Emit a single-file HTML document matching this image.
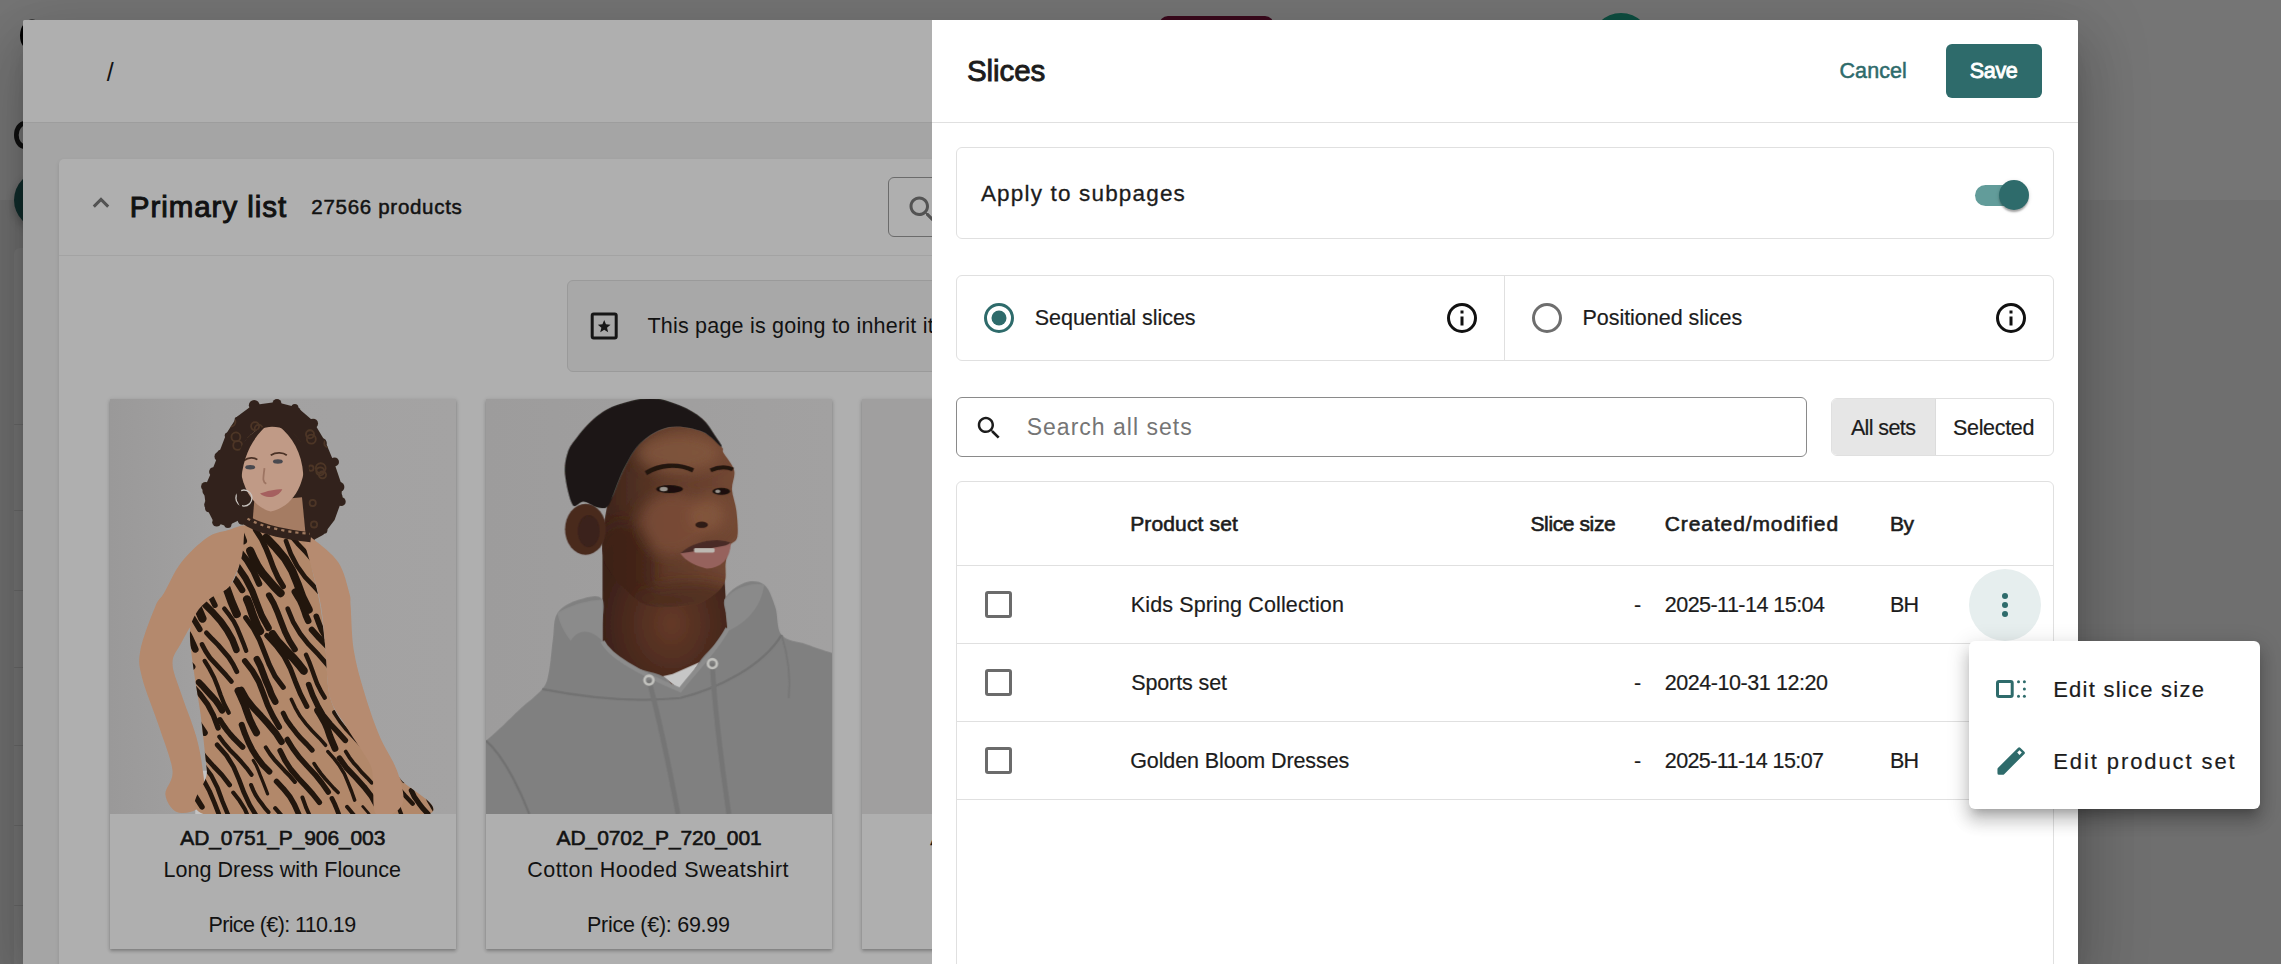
<!DOCTYPE html>
<html lang="en">
<head>
<meta charset="utf-8">
<title>Slices</title>
<style>
html,body{margin:0;padding:0}
html{width:2281px;height:964px;overflow:hidden;background:#6f6f6f}
body{width:2281px;height:964px;overflow:hidden;position:relative;background:#6f6f6f;font-family:"Liberation Sans",sans-serif;color:#1c1c1c}
.abs{position:absolute}
.t{position:absolute;white-space:nowrap;line-height:1;margin:0;padding:0}
.b{font-weight:bold}
svg{display:block}
</style>
</head>
<body>
<!-- underlying page (dimmed by backdrop) -->
<div class="abs" id="under" style="left:0;top:0;width:2281px;height:964px;overflow:hidden">
  <div class="abs" style="left:0;top:0;width:2281px;height:200px;background:#757575"></div>
  <svg class="abs" style="left:0;top:0" width="80" height="260" viewBox="0 0 80 260"><ellipse cx="32" cy="35.5" rx="12" ry="16" fill="#000"/><ellipse cx="25" cy="135" rx="8.65" ry="11.65" fill="none" stroke="#101010" stroke-width="4.7"/></svg>
  <div class="abs" style="left:14px;top:248px;width:300px;height:800px;border-radius:6px;background:#757575">
    <div class="abs" style="left:0;top:176px;width:300px;height:1px;background:#696969"></div>
    <div class="abs" style="left:0;top:262px;width:300px;height:1px;background:#696969"></div>
    <div class="abs" style="left:0;top:342px;width:300px;height:1px;background:#696969"></div>
    <div class="abs" style="left:0;top:419px;width:300px;height:1px;background:#696969"></div>
    <div class="abs" style="left:0;top:497px;width:300px;height:1px;background:#696969"></div>
    <div class="abs" style="left:0;top:577px;width:300px;height:1px;background:#696969"></div>
    <div class="abs" style="left:0;top:657px;width:300px;height:1px;background:#696969"></div>
  </div>
  <div class="abs" style="left:13.8px;top:171px;width:58px;height:58px;border-radius:50%;background:#112c2b;box-shadow:0 4px 8px rgba(0,0,0,.25)"></div>
  <div class="abs" style="left:1159px;top:16px;width:115px;height:40px;border-radius:9px;background:#3b0a1d"></div>
  <div class="abs" style="left:1591px;top:13px;width:60px;height:60px;border-radius:50%;background:#0e4f41"></div>
</div>
<!-- modal -->
<div class="abs" id="modal" style="left:23px;top:20px;width:2055px;height:944px;background:#a5a5a5;border-radius:2px 2px 0 0;box-shadow:0 16px 22px -10px rgba(0,0,0,.2),0 36px 57px 4px rgba(0,0,0,.14),0 13px 69px 12px rgba(0,0,0,.12);overflow:hidden">
  <!-- modal header (dimmed) -->
  <div class="abs" style="left:0;top:0;width:909px;height:102px;background:#afafaf;border-bottom:1px solid #9d9d9d"></div>
  <!-- primary list card -->
  <div class="abs" id="plcard" style="left:36px;top:139px;width:900px;height:900px;background:#afafaf;border-radius:5px;box-shadow:0 2px 4px rgba(0,0,0,.12)">
    <div class="abs" style="left:0;top:96px;width:900px;height:1px;background:#a3a3a3"></div>
  </div>
  <!-- chevron -->
<svg class="abs" style="left:66px;top:174px" width="24" height="16" viewBox="0 0 24 16"><polyline points="4.8,12.6 12,5.4 19.2,12.6" fill="none" stroke="#535353" stroke-width="3"/></svg>
<!-- left search box -->
<div class="abs" style="left:865px;top:157px;width:220px;height:58px;border:1px solid #6b6b6b;border-radius:6px"></div>
<svg class="abs" style="left:882px;top:171.5px" width="36" height="36" viewBox="0 0 24 24"><path fill="#535353" d="M15.5 14h-.79l-.28-.27C15.41 12.59 16 11.11 16 9.5 16 5.91 13.09 3 9.5 3S3 5.91 3 9.5 5.91 16 9.5 16c1.61 0 3.09-.59 4.23-1.57l.27.28v.79l5 4.99L20.49 19l-4.99-5zm-6 0C7.01 14 5 11.99 5 9.5S7.01 5 9.5 5 14 7.01 14 9.5 11.99 14 9.5 14z"/></svg>
<!-- info banner -->
<div class="abs" style="left:544px;top:260px;width:520px;height:90px;background:#a8a8a8;border:1px solid #9a9a9a;border-radius:6px"></div>
<svg class="abs" style="left:563px;top:288px" width="36" height="36" viewBox="0 0 36 36"><rect x="6.2" y="6.1" width="24" height="24" rx="1.5" fill="none" stroke="#161616" stroke-width="3"/><path fill="#161616" transform="translate(18.2 18.9) scale(.88) translate(-18.2 -18.4)" d="M18.2 10.6l2 4.9 5.2.4-4 3.4 1.3 5.1-4.5-2.8-4.5 2.8 1.3-5.1-4-3.4 5.2-.4z"/></svg>
<!-- product card 1 -->
<div class="abs" style="left:87px;top:379px;width:346px;height:550px;background:#afafaf;box-shadow:0 2px 3px rgba(0,0,0,.22),0 1px 5px rgba(0,0,0,.12)">
<svg class="abs" style="left:0;top:0" width="346" height="415" viewBox="22 20 775 930" preserveAspectRatio="none">
<defs><linearGradient id="bg1" x1="0" x2="1" y1="0" y2="0"><stop offset="0" stop-color="#9a9999"/><stop offset=".3" stop-color="#a2a1a1"/><stop offset="1" stop-color="#a4a3a3"/></linearGradient>
<clipPath id="hr1"><path d="M394,27 L442,39 L476,68 L505,117 L525,165 L541,213 L541,247 L525,291 L500,324 L476,337 L457,310 L440,290 L340,285 L331,281 L312,291 L283,305 L254,295 L237,262 L232,223 L249,184 L264,146 L283,97 L307,59 L341,34 Z"/></clipPath><filter id="soft1" filterUnits="userSpaceOnUse" x="0" y="0" width="830" height="990"><feGaussianBlur stdDeviation="1.6"/></filter><clipPath id="dr1"><path d="M331.0,298.0 C343.8,289.3 373.7,312.8 395.0,318.0 C416.3,323.2 445.5,314.2 459.0,329.0 C472.5,343.8 470.3,381.2 476.0,407.0 C481.7,432.8 488.2,454.7 493.0,484.0 C497.8,513.3 501.3,548.8 505.0,583.0 C508.7,617.2 507.0,660.0 515.0,689.0 C523.0,718.0 534.5,734.5 553.0,757.0 C571.5,779.5 605.8,804.7 626.0,824.0 C646.2,843.3 658.0,851.2 674.0,873.0 C690.0,894.8 792.8,941.3 722.0,955.0 C651.2,968.7 329.5,972.0 249.0,955.0 C168.5,938.0 243.0,890.8 239.0,853.0 C235.0,815.2 229.8,765.0 225.0,728.0 C220.2,691.0 214.0,661.7 210.0,631.0 C206.0,600.3 200.2,565.8 201.0,544.0 C201.8,522.2 207.7,512.7 215.0,500.0 C222.3,487.3 232.0,478.7 245.0,468.0 C258.0,457.3 280.8,452.3 293.0,436.0 C305.2,419.7 311.7,393.0 318.0,370.0 C324.3,347.0 318.2,306.7 331.0,298.0 Z"/></clipPath></defs>
<rect x="22" y="20" width="775" height="930" fill="url(#bg1)"/><g filter="url(#soft1)">
<rect x="213" y="853" width="38" height="100" fill="#c4c4c4"/>
<path d="M394,27 L442,39 L476,68 L505,117 L525,165 L541,213 L541,247 L525,291 L500,324 L476,337 L457,310 L440,290 L340,285 L331,281 L312,291 L283,305 L254,295 L237,262 L232,223 L249,184 L264,146 L283,97 L307,59 L341,34 Z" fill="#33241c"/>
<g fill="#33241c"><circle cx="395" cy="36" r="10"/><circle cx="396" cy="30" r="10"/><circle cx="439" cy="48" r="10"/><circle cx="436" cy="39" r="8"/><circle cx="477" cy="75" r="11"/><circle cx="476" cy="76" r="9"/><circle cx="497" cy="118" r="10"/><circle cx="498" cy="119" r="9"/><circle cx="525" cy="161" r="10"/><circle cx="514" cy="161" r="10"/><circle cx="536" cy="217" r="11"/><circle cx="529" cy="211" r="9"/><circle cx="540" cy="250" r="10"/><circle cx="534" cy="240" r="9"/><circle cx="516" cy="283" r="10"/><circle cx="514" cy="289" r="7"/><circle cx="501" cy="314" r="8"/><circle cx="491" cy="313" r="11"/><circle cx="469" cy="334" r="11"/><circle cx="467" cy="334" r="8"/><circle cx="459" cy="308" r="11"/><circle cx="456" cy="308" r="7"/><circle cx="348" cy="37" r="9"/><circle cx="345" cy="34" r="12"/><circle cx="312" cy="68" r="7"/><circle cx="308" cy="67" r="7"/><circle cx="292" cy="101" r="8"/><circle cx="286" cy="102" r="7"/><circle cx="271" cy="143" r="9"/><circle cx="267" cy="149" r="11"/><circle cx="254" cy="183" r="10"/><circle cx="260" cy="188" r="11"/><circle cx="236" cy="216" r="10"/><circle cx="241" cy="226" r="12"/><circle cx="244" cy="265" r="9"/><circle cx="244" cy="257" r="11"/><circle cx="264" cy="289" r="9"/><circle cx="261" cy="296" r="10"/><circle cx="285" cy="294" r="11"/><circle cx="286" cy="301" r="8"/><circle cx="320" cy="281" r="11"/><circle cx="319" cy="291" r="11"/><circle cx="331" cy="282" r="10"/><circle cx="335" cy="282" r="11"/></g><g fill="none" stroke="#4d3627" stroke-width="4" clip-path="url(#hr1)"><circle cx="347" cy="81" r="9"/><circle cx="473" cy="110" r="10"/><circle cx="511" cy="119" r="9"/><circle cx="308" cy="124" r="10"/><circle cx="472" cy="175" r="6"/><circle cx="476" cy="253" r="7"/><circle cx="498" cy="190" r="8"/><circle cx="304" cy="105" r="10"/><circle cx="292" cy="71" r="11"/><circle cx="355" cy="87" r="9"/><circle cx="470" cy="99" r="9"/><circle cx="256" cy="68" r="11"/><circle cx="493" cy="182" r="9"/><circle cx="369" cy="297" r="10"/><circle cx="479" cy="301" r="7"/><circle cx="261" cy="110" r="7"/><circle cx="273" cy="73" r="9"/><circle cx="494" cy="175" r="11"/><circle cx="505" cy="76" r="9"/></g>
<path d="M345,250 L340,312 L460,322 L452,240 Z" fill="#a57b63"/>
<path d="M313,165 C312,110 345,84 385,82 C430,84 458,112 458,160 C458,210 432,262 382,272 C340,262 316,215 313,165 Z" fill="#c09a86"/>
<path d="M331.0,306.0 C325.2,296.7 300.3,309.8 285.0,314.0 C269.7,318.2 256.3,318.8 239.0,331.0 C221.7,343.2 197.0,366.3 181.0,387.0 C165.0,407.7 152.7,438.5 143.0,455.0 C133.3,471.5 131.8,464.7 123.0,486.0 C114.2,507.3 94.8,556.5 90.0,583.0 C85.2,609.5 86.8,616.0 94.0,645.0 C101.2,674.0 121.7,722.3 133.0,757.0 C144.3,791.7 159.8,828.2 162.0,853.0 C164.2,877.8 144.7,890.7 146.0,906.0 C147.3,921.3 158.5,939.3 170.0,945.0 C181.5,950.7 204.7,947.5 215.0,940.0 C225.3,932.5 229.5,914.5 232.0,900.0 C234.5,885.5 232.8,873.7 230.0,853.0 C227.2,832.3 223.2,805.0 215.0,776.0 C206.8,747.0 189.8,706.3 181.0,679.0 C172.2,651.7 162.0,630.5 162.0,612.0 C162.0,593.5 172.2,584.2 181.0,568.0 C189.8,551.8 199.7,529.0 215.0,515.0 C230.3,501.0 260.0,497.2 273.0,484.0 C286.0,470.8 285.2,455.0 293.0,436.0 C300.8,417.0 313.7,391.7 320.0,370.0 C326.3,348.3 336.8,315.3 331.0,306.0 Z" fill="#b4896d"/>
<path d="M331.0,298.0 C343.8,289.3 373.7,312.8 395.0,318.0 C416.3,323.2 445.5,314.2 459.0,329.0 C472.5,343.8 470.3,381.2 476.0,407.0 C481.7,432.8 488.2,454.7 493.0,484.0 C497.8,513.3 501.3,548.8 505.0,583.0 C508.7,617.2 507.0,660.0 515.0,689.0 C523.0,718.0 534.5,734.5 553.0,757.0 C571.5,779.5 605.8,804.7 626.0,824.0 C646.2,843.3 658.0,851.2 674.0,873.0 C690.0,894.8 792.8,941.3 722.0,955.0 C651.2,968.7 329.5,972.0 249.0,955.0 C168.5,938.0 243.0,890.8 239.0,853.0 C235.0,815.2 229.8,765.0 225.0,728.0 C220.2,691.0 214.0,661.7 210.0,631.0 C206.0,600.3 200.2,565.8 201.0,544.0 C201.8,522.2 207.7,512.7 215.0,500.0 C222.3,487.3 232.0,478.7 245.0,468.0 C258.0,457.3 280.8,452.3 293.0,436.0 C305.2,419.7 311.7,393.0 318.0,370.0 C324.3,347.0 318.2,306.7 331.0,298.0 Z" fill="#b2886b"/>
<g clip-path="url(#dr1)" fill="none" stroke="#21160f" stroke-linecap="round" stroke-linejoin="round"><path d="M-214,463 L-208,477 L-203,491 L-198,505 L-192,518 L-185,532 L-177,544" stroke-width="10.7"/><path d="M-151,564 L-144,582 L-137,600 L-130,618 L-121,635 L-110,651 L-98,666" stroke-width="13.7"/><path d="M-80,672 L-72,691 L-65,711 L-57,730 L-49,749 L-39,766 L-27,783" stroke-width="8.8"/><path d="M-8,790 L9,812 L23,837 L33,864 L43,891 L55,916 L71,940" stroke-width="8.3"/><path d="M93,947 L107,974 L118,1003 L130,1032 L144,1059 L163,1083 L184,1106" stroke-width="8.4"/><path d="M205,1127 L211,1139 L216,1150 L220,1162 L225,1174 L229,1186 L234,1198" stroke-width="7.7"/><path d="M252,1230 L261,1241 L270,1252 L280,1262 L290,1273 L299,1283 L308,1294" stroke-width="10.9"/><path d="M310,1319 L320,1340 L333,1360 L348,1378 L364,1395 L380,1412 L395,1431" stroke-width="8.2"/><path d="M-192,449 L-186,461 L-181,473 L-176,485 L-172,497 L-167,510 L-162,522" stroke-width="16.8"/><path d="M-150,537 L-143,554 L-135,570 L-125,585 L-114,599 L-102,613 L-89,626" stroke-width="13.7"/><path d="M-72,649 L-62,676 L-51,702 L-38,726 L-21,748 L-2,768 L17,789" stroke-width="10.1"/><path d="M28,820 L44,836 L59,853 L72,871 L83,890 L92,911 L100,932" stroke-width="11.6"/><path d="M125,959 L143,985 L157,1013 L168,1043 L180,1073 L196,1099 L216,1124" stroke-width="8.5"/><path d="M225,1139 L235,1149 L245,1160 L256,1171 L265,1183 L274,1195 L282,1207" stroke-width="6.2"/><path d="M291,1233 L309,1253 L325,1275 L337,1299 L347,1325 L357,1351 L368,1375" stroke-width="11.3"/><path d="M-178,441 L-166,461 L-151,479 L-134,496 L-118,514 L-103,533 L-91,553" stroke-width="14.6"/><path d="M-87,585 L-72,611 L-53,636 L-32,658 L-11,681 L6,707 L19,735" stroke-width="14.5"/><path d="M36,755 L47,778 L57,803 L66,827 L77,850 L92,872 L108,892" stroke-width="14.2"/><path d="M134,912 L143,927 L150,943 L156,960 L162,976 L169,993 L176,1008" stroke-width="10.0"/><path d="M190,1028 L203,1044 L218,1060 L233,1075 L246,1092 L258,1109 L267,1128" stroke-width="6.7"/><path d="M265,1151 L281,1172 L300,1193 L319,1213 L336,1234 L349,1258 L360,1283" stroke-width="7.5"/><path d="M361,1303 L376,1328 L395,1350 L415,1372 L434,1394 L451,1418 L463,1445" stroke-width="8.7"/><path d="M-142,418 L-130,444 L-120,471 L-110,497 L-96,522 L-80,544 L-60,565" stroke-width="12.8"/><path d="M-45,599 L-32,613 L-19,627 L-6,641 L6,656 L16,672 L25,689" stroke-width="17.4"/><path d="M33,727 L43,739 L54,750 L65,761 L75,772 L85,784 L94,796" stroke-width="9.6"/><path d="M105,813 L116,834 L125,856 L134,878 L142,900 L153,921 L167,941" stroke-width="6.7"/><path d="M190,951 L200,967 L209,984 L217,1001 L223,1020 L230,1038 L238,1055" stroke-width="11.7"/><path d="M265,1072 L278,1090 L288,1110 L297,1130 L305,1151 L313,1172 L323,1192" stroke-width="10.1"/><path d="M342,1215 L354,1242 L370,1267 L390,1290 L411,1312 L430,1335 L446,1360" stroke-width="11.2"/><path d="M-135,414 L-121,428 L-107,443 L-95,458 L-84,474 L-74,492 L-67,510" stroke-width="16.3"/><path d="M-67,530 L-60,541 L-51,551 L-43,561 L-33,570 L-24,580 L-15,590" stroke-width="11.2"/><path d="M-11,610 L-2,619 L7,629 L15,638 L24,648 L31,658 L38,669" stroke-width="10.2"/><path d="M33,689 L45,703 L59,718 L72,732 L85,746 L96,761 L105,778" stroke-width="15.1"/><path d="M112,791 L121,803 L129,815 L136,827 L143,841 L148,854 L154,868" stroke-width="9.6"/><path d="M158,890 L165,902 L173,914 L181,925 L191,936 L201,947 L211,957" stroke-width="12.4"/><path d="M231,987 L245,1003 L258,1020 L268,1039 L277,1059 L284,1079 L292,1099" stroke-width="6.6"/><path d="M310,1107 L317,1123 L323,1139 L329,1155 L336,1171 L343,1187 L352,1201" stroke-width="7.0"/><path d="M380,1226 L391,1255 L404,1283 L420,1309 L441,1332 L462,1355 L482,1379" stroke-width="6.9"/><path d="M-117,402 L-108,423 L-97,442 L-84,461 L-69,477 L-54,494 L-38,511" stroke-width="18.6"/><path d="M-17,544 L-11,560 L-5,576 L1,592 L8,608 L16,623 L25,637" stroke-width="10.9"/><path d="M50,649 L58,670 L66,692 L75,713 L85,733 L97,752 L111,769" stroke-width="10.9"/><path d="M128,799 L141,823 L157,846 L176,867 L196,888 L213,910 L228,934" stroke-width="12.5"/><path d="M249,967 L264,991 L275,1017 L285,1044 L296,1070 L310,1094 L328,1116" stroke-width="7.4"/><path d="M343,1146 L355,1161 L368,1175 L381,1188 L394,1203 L406,1217 L416,1233" stroke-width="6.2"/><path d="M416,1250 L422,1266 L429,1282 L437,1297 L446,1311 L457,1325 L468,1337" stroke-width="11.7"/><path d="M-81,380 L-62,405 L-46,432 L-34,462 L-23,492 L-9,520 L10,545" stroke-width="13.6"/><path d="M38,574 L43,589 L49,605 L56,620 L63,634 L72,648 L82,661" stroke-width="10.9"/><path d="M96,675 L116,697 L135,720 L150,746 L162,774 L172,802 L185,829" stroke-width="11.7"/><path d="M215,852 L232,875 L245,899 L256,925 L266,951 L277,977 L292,1000" stroke-width="10.4"/><path d="M312,1006 L328,1029 L341,1053 L351,1079 L361,1105 L373,1130 L388,1152" stroke-width="8.9"/><path d="M405,1181 L422,1203 L441,1224 L460,1244 L477,1266 L490,1290 L501,1316" stroke-width="10.8"/><path d="M-67,371 L-53,386 L-41,401 L-30,418 L-22,436 L-14,454 L-7,473" stroke-width="17.2"/><path d="M21,501 L26,514 L32,528 L37,542 L42,555 L47,568 L54,581" stroke-width="18.7"/><path d="M65,595 L71,609 L78,621 L86,634 L95,645 L105,656 L115,667" stroke-width="17.7"/><path d="M135,697 L142,714 L149,732 L158,749 L168,764 L179,779 L192,793" stroke-width="8.9"/><path d="M209,816 L230,839 L249,864 L263,892 L274,922 L286,951 L301,978" stroke-width="10.0"/><path d="M330,996 L342,1013 L351,1031 L359,1050 L366,1070 L374,1089 L382,1108" stroke-width="11.0"/><path d="M415,1131 L424,1145 L431,1160 L437,1176 L443,1192 L449,1208 L456,1223" stroke-width="7.4"/><path d="M475,1237 L487,1249 L497,1263 L506,1277 L514,1292 L521,1307 L527,1323" stroke-width="6.8"/><path d="M-41,355 L-32,374 L-24,393 L-17,413 L-9,433 L1,452 L12,469" stroke-width="19.0"/><path d="M36,489 L56,512 L73,537 L85,564 L96,593 L108,621 L123,647" stroke-width="14.7"/><path d="M148,663 L153,674 L157,686 L161,697 L166,709 L171,720 L176,731" stroke-width="9.9"/><path d="M195,749 L205,775 L218,799 L235,822 L254,843 L273,863 L290,885" stroke-width="10.6"/><path d="M298,902 L312,920 L324,939 L333,960 L342,982 L350,1004 L360,1025" stroke-width="9.1"/><path d="M379,1039 L388,1065 L400,1090 L415,1113 L433,1134 L453,1154 L471,1175" stroke-width="9.4"/><path d="M471,1194 L478,1211 L485,1226 L494,1241 L504,1255 L516,1268 L528,1281" stroke-width="9.0"/><path d="M-18,341 L-7,369 L4,397 L18,424 L36,448 L57,470 L77,493" stroke-width="16.1"/><path d="M93,513 L103,533 L111,553 L119,574 L127,595 L137,615 L149,633" stroke-width="13.8"/><path d="M179,652 L188,671 L196,691 L204,712 L212,732 L222,750 L234,768" stroke-width="14.0"/><path d="M262,795 L283,819 L299,845 L311,873 L322,902 L335,930 L351,956" stroke-width="10.5"/><path d="M372,967 L382,994 L393,1021 L407,1046 L424,1069 L444,1090 L463,1112" stroke-width="6.7"/><path d="M471,1127 L476,1140 L481,1152 L485,1165 L491,1177 L496,1189 L503,1200" stroke-width="6.4"/><path d="M516,1216 L535,1237 L554,1257 L571,1279 L584,1302 L595,1328 L605,1354" stroke-width="6.9"/><path d="M1,329 L11,340 L19,351 L27,364 L34,377 L40,390 L45,404" stroke-width="19.7"/><path d="M68,433 L79,462 L91,492 L105,519 L124,543 L146,566 L166,589" stroke-width="14.9"/><path d="M167,617 L185,640 L205,661 L224,682 L241,705 L254,730 L264,757" stroke-width="12.2"/><path d="M267,777 L278,792 L290,806 L303,819 L316,833 L328,847 L339,862" stroke-width="9.5"/><path d="M338,885 L343,897 L348,907 L355,918 L362,927 L369,937 L377,946" stroke-width="9.1"/><path d="M399,966 L411,980 L422,995 L431,1011 L439,1027 L446,1045 L452,1062" stroke-width="9.1"/><path d="M463,1091 L481,1117 L502,1141 L524,1164 L543,1189 L558,1217 L570,1246" stroke-width="11.8"/><path d="M15,320 L24,329 L33,338 L41,348 L48,358 L55,368 L61,379" stroke-width="12.7"/><path d="M70,414 L78,433 L88,451 L99,467 L113,482 L127,497 L141,512" stroke-width="18.2"/><path d="M151,550 L158,563 L166,575 L176,587 L185,598 L196,609 L206,620" stroke-width="14.7"/><path d="M221,655 L231,665 L240,675 L249,685 L258,695 L266,706 L273,718" stroke-width="14.3"/><path d="M268,739 L275,750 L283,761 L291,771 L300,781 L309,790 L319,800" stroke-width="12.5"/><path d="M343,830 L350,842 L355,854 L360,867 L365,879 L370,892 L375,905" stroke-width="7.2"/><path d="M392,937 L406,953 L420,968 L435,983 L448,999 L460,1016 L470,1035" stroke-width="9.3"/><path d="M470,1062 L479,1076 L490,1089 L502,1102 L514,1114 L526,1127 L537,1140" stroke-width="9.2"/><path d="M546,1155 L554,1167 L560,1179 L566,1192 L571,1205 L576,1218 L581,1231" stroke-width="6.3"/><path d="M42,303 L49,320 L55,337 L61,354 L69,370 L77,386 L87,401" stroke-width="12.9"/><path d="M105,429 L113,442 L122,455 L132,466 L142,478 L153,489 L163,500" stroke-width="10.2"/><path d="M177,519 L184,529 L191,538 L198,549 L203,559 L208,570 L213,581" stroke-width="15.1"/><path d="M234,607 L245,625 L255,644 L263,664 L270,684 L278,704 L288,723" stroke-width="9.6"/><path d="M317,750 L324,770 L332,789 L341,807 L352,824 L364,840 L379,855" stroke-width="13.4"/><path d="M395,877 L410,893 L424,910 L435,929 L444,949 L452,970 L460,991" stroke-width="12.3"/><path d="M473,1020 L491,1042 L511,1063 L530,1084 L547,1107 L560,1132 L571,1159" stroke-width="9.8"/><path d="M594,1183 L602,1200 L609,1217 L616,1235 L623,1253 L630,1270 L640,1286" stroke-width="6.8"/><path d="M55,295 L64,309 L74,323 L85,335 L97,348 L109,360 L120,373" stroke-width="10.8"/><path d="M120,394 L133,420 L150,444 L170,466 L190,488 L208,511 L223,536" stroke-width="12.8"/><path d="M228,570 L236,585 L246,600 L258,613 L270,626 L282,639 L294,653" stroke-width="10.6"/><path d="M309,674 L316,689 L323,705 L329,722 L335,738 L342,753 L350,768" stroke-width="16.0"/><path d="M371,801 L380,815 L390,828 L401,840 L413,853 L425,865 L436,878" stroke-width="9.2"/><path d="M453,913 L457,924 L461,935 L466,946 L471,957 L476,968 L482,978" stroke-width="8.9"/><path d="M497,996 L503,1011 L511,1025 L520,1038 L529,1050 L540,1062 L551,1074" stroke-width="6.0"/><path d="M560,1100 L570,1110 L579,1120 L589,1130 L598,1140 L607,1150 L615,1161" stroke-width="6.3"/><path d="M75,283 L82,298 L90,312 L99,325 L110,338 L121,350 L133,362" stroke-width="15.3"/><path d="M140,392 L156,411 L173,430 L190,448 L206,468 L219,489 L229,512" stroke-width="18.8"/><path d="M238,544 L251,558 L264,571 L276,585 L288,599 L298,615 L306,631" stroke-width="10.8"/><path d="M316,672 L328,693 L343,712 L360,730 L377,749 L393,768 L406,788" stroke-width="14.8"/><path d="M403,808 L414,830 L427,850 L443,869 L460,887 L476,905 L491,924" stroke-width="12.2"/><path d="M503,956 L518,973 L532,990 L544,1009 L553,1029 L562,1050 L569,1071" stroke-width="11.0"/><path d="M584,1094 L596,1120 L610,1144 L629,1166 L648,1187 L667,1208 L683,1232" stroke-width="11.4"/><path d="M110,260 L119,274 L126,289 L132,304 L138,320 L144,335 L150,351" stroke-width="11.3"/><path d="M162,361 L172,371 L181,381 L190,392 L199,402 L207,414 L213,426" stroke-width="15.6"/><path d="M220,464 L236,482 L254,500 L270,518 L284,538 L296,559 L305,582" stroke-width="14.9"/><path d="M324,607 L341,629 L355,653 L365,679 L375,706 L387,731 L401,755" stroke-width="12.8"/><path d="M419,783 L432,804 L447,824 L464,843 L481,861 L497,881 L511,901" stroke-width="12.2"/><path d="M519,915 L525,927 L530,939 L535,952 L539,964 L544,977 L549,989" stroke-width="10.4"/><path d="M562,1006 L580,1026 L598,1045 L614,1067 L627,1090 L637,1115 L647,1140" stroke-width="9.0"/><path d="M123,253 L132,277 L143,300 L158,321 L174,340 L192,359 L209,378" stroke-width="16.2"/><path d="M226,407 L231,420 L236,433 L240,445 L245,458 L251,470 L257,482" stroke-width="12.5"/><path d="M278,490 L289,504 L299,518 L307,534 L314,551 L321,568 L327,584" stroke-width="10.0"/><path d="M351,603 L359,619 L365,635 L371,651 L378,667 L384,683 L392,698" stroke-width="14.9"/><path d="M410,724 L418,740 L428,754 L439,768 L450,781 L463,794 L475,807" stroke-width="11.3"/><path d="M479,837 L487,849 L495,860 L504,871 L514,882 L523,892 L533,902" stroke-width="8.1"/><path d="M553,934 L573,958 L589,984 L601,1012 L612,1041 L624,1069 L641,1094" stroke-width="8.8"/><path d="M661,1099 L675,1127 L686,1156 L698,1185 L714,1212 L734,1236 L756,1259" stroke-width="7.6"/><path d="M152,234 L158,249 L164,264 L170,279 L176,294 L184,308 L192,322" stroke-width="11.4"/><path d="M210,345 L232,367 L252,391 L270,416 L283,444 L294,474 L306,502" stroke-width="18.2"/><path d="M326,510 L343,534 L357,560 L368,588 L379,616 L392,642 L410,666" stroke-width="11.5"/><path d="M428,693 L437,712 L448,731 L461,748 L475,764 L491,780 L505,796" stroke-width="7.9"/><path d="M510,810 L524,826 L536,842 L547,860 L555,879 L563,899 L570,919" stroke-width="7.8"/><path d="M588,933 L600,947 L611,962 L620,977 L628,993 L635,1010 L641,1027" stroke-width="6.0"/><path d="M656,1060 L669,1086 L686,1108 L706,1130 L726,1151 L743,1174 L757,1199" stroke-width="11.6"/><path d="M164,227 L176,240 L188,253 L200,266 L212,279 L222,293 L231,309" stroke-width="13.9"/><path d="M231,336 L243,357 L257,375 L274,393 L290,410 L305,428 L318,448" stroke-width="14.3"/><path d="M329,469 L334,481 L338,493 L342,505 L347,517 L352,529 L358,540" stroke-width="18.3"/><path d="M373,550 L394,573 L412,597 L426,624 L437,653 L449,682 L463,709" stroke-width="11.4"/><path d="M487,718 L495,731 L503,745 L509,759 L514,774 L520,789 L526,803" stroke-width="15.2"/><path d="M536,825 L552,847 L572,868 L591,889 L608,911 L622,936 L633,962" stroke-width="12.6"/><path d="M652,986 L660,1007 L668,1029 L677,1050 L688,1070 L702,1088 L717,1105" stroke-width="6.3"/><path d="M183,215 L202,235 L220,255 L236,277 L248,300 L258,326 L268,351" stroke-width="12.9"/><path d="M288,374 L309,397 L326,422 L340,449 L351,478 L362,506 L377,533" stroke-width="14.7"/><path d="M386,547 L396,562 L408,575 L420,588 L433,601 L445,615 L456,629" stroke-width="18.5"/><path d="M467,660 L476,684 L487,707 L499,728 L515,748 L532,766 L549,785" stroke-width="12.6"/><path d="M550,810 L558,823 L567,835 L577,846 L587,858 L598,869 L608,880" stroke-width="8.4"/><path d="M621,893 L632,912 L640,932 L648,953 L656,974 L665,993 L676,1012" stroke-width="11.4"/><path d="M692,1025 L707,1040 L721,1056 L733,1073 L744,1090 L752,1109 L760,1129" stroke-width="7.2"/><path d="M209,199 L214,212 L219,224 L224,237 L229,250 L236,262 L243,273" stroke-width="12.6"/><path d="M254,290 L270,315 L290,337 L310,359 L329,382 L344,407 L356,434" stroke-width="14.1"/><path d="M378,460 L389,479 L398,500 L406,521 L414,542 L424,562 L436,581" stroke-width="13.4"/><path d="M461,593 L468,609 L474,625 L480,642 L486,658 L494,674 L503,689" stroke-width="10.0"/><path d="M524,722 L537,742 L552,761 L569,779 L586,797 L601,816 L614,837" stroke-width="9.2"/><path d="M632,869 L642,882 L651,896 L658,911 L665,926 L671,942 L677,958" stroke-width="9.2"/><path d="M686,982 L702,1005 L722,1026 L742,1048 L760,1070 L774,1095 L785,1122" stroke-width="6.1"/><path d="M226,188 L247,210 L267,232 L285,256 L299,282 L310,310 L321,338" stroke-width="15.9"/><path d="M336,360 L344,378 L353,395 L364,411 L377,426 L390,441 L404,455" stroke-width="18.3"/><path d="M420,490 L432,519 L448,546 L467,570 L489,593 L510,617 L526,644" stroke-width="10.6"/><path d="M529,666 L545,682 L560,699 L573,717 L584,736 L593,757 L601,778" stroke-width="15.9"/><path d="M619,804 L628,827 L638,850 L651,871 L666,890 L683,909 L700,927" stroke-width="9.8"/><path d="M710,961 L715,973 L721,984 L727,994 L735,1004 L742,1014 L751,1024" stroke-width="7.4"/><path d="M776,1048 L785,1072 L794,1095 L805,1117 L818,1138 L834,1157 L851,1175" stroke-width="6.8"/><path d="M256,169 L265,194 L274,218 L286,241 L300,263 L317,283 L335,301" stroke-width="10.7"/><path d="M348,313 L361,333 L371,354 L380,376 L388,398 L398,420 L410,440" stroke-width="12.2"/><path d="M436,452 L442,462 L448,472 L453,483 L457,494 L461,506 L466,517" stroke-width="14.6"/><path d="M474,537 L491,556 L509,574 L524,593 L537,614 L547,637 L556,660" stroke-width="13.7"/><path d="M569,695 L579,709 L589,722 L600,735 L612,747 L624,759 L635,772" stroke-width="13.6"/><path d="M652,807 L657,819 L661,830 L665,842 L670,853 L675,864 L681,875" stroke-width="11.7"/><path d="M697,897 L704,912 L714,926 L724,939 L736,952 L747,964 L759,977" stroke-width="11.7"/><path d="M766,1009 L772,1020 L779,1031 L786,1041 L794,1050 L802,1060 L811,1069" stroke-width="8.5"/><path d="M272,159 L290,181 L305,204 L316,229 L326,256 L337,282 L350,306" stroke-width="15.0"/><path d="M372,331 L394,354 L414,378 L430,405 L442,434 L453,464 L467,492" stroke-width="18.2"/><path d="M484,507 L490,523 L496,538 L504,552 L513,565 L523,578 L533,590" stroke-width="12.6"/><path d="M552,618 L561,639 L570,658 L582,676 L596,693 L611,709 L626,725" stroke-width="10.5"/><path d="M638,740 L653,760 L665,782 L674,805 L683,829 L693,852 L705,874" stroke-width="8.4"/><path d="M729,905 L735,920 L743,934 L751,947 L761,960 L772,972 L783,984" stroke-width="6.9"/><path d="M803,1018 L812,1027 L821,1037 L830,1047 L838,1057 L845,1068 L851,1079" stroke-width="11.4"/><path d="M297,144 L318,168 L334,195 L347,224 L358,255 L372,283 L390,309" stroke-width="13.3"/><path d="M416,338 L427,367 L441,394 L459,419 L480,441 L501,464 L519,489" stroke-width="10.3"/><path d="M526,524 L539,538 L553,552 L566,567 L577,582 L587,599 L596,616" stroke-width="12.7"/><path d="M610,635 L616,645 L621,656 L626,667 L630,678 L634,689 L638,701" stroke-width="11.7"/><path d="M654,716 L664,726 L673,737 L681,749 L689,761 L695,774 L701,787" stroke-width="9.5"/><path d="M725,818 L737,843 L748,870 L758,896 L771,922 L787,945 L806,966" stroke-width="9.3"/><path d="M833,991 L843,1010 L851,1029 L858,1050 L866,1070 L876,1089 L887,1107" stroke-width="11.5"/><path d="M307,138 L322,163 L341,186 L362,208 L382,230 L398,255 L410,283" stroke-width="14.1"/><path d="M408,301 L424,323 L442,344 L461,364 L479,385 L493,407 L504,432" stroke-width="10.3"/><path d="M515,443 L527,471 L538,500 L550,528 L566,553 L586,576 L607,598" stroke-width="17.3"/><path d="M611,621 L623,634 L636,648 L649,662 L661,676 L671,692 L680,708" stroke-width="17.0"/><path d="M689,727 L700,740 L710,754 L718,768 L726,784 L732,800 L738,816" stroke-width="10.1"/><path d="M757,843 L765,852 L773,860 L781,869 L788,879 L794,889 L800,899" stroke-width="12.9"/><path d="M818,927 L831,955 L842,984 L854,1013 L870,1039 L889,1063 L911,1085" stroke-width="7.4"/><path d="M346,113 L358,142 L369,171 L382,200 L398,226 L418,249 L440,272" stroke-width="12.5"/><path d="M448,295 L456,316 L466,335 L478,353 L492,370 L507,386 L522,402" stroke-width="11.8"/><path d="M541,435 L558,455 L573,477 L585,501 L595,526 L604,551 L616,575" stroke-width="17.7"/><path d="M643,600 L655,613 L667,628 L677,643 L685,659 L693,676 L699,693" stroke-width="12.1"/><path d="M713,711 L722,721 L731,731 L739,742 L746,753 L752,765 L757,777" stroke-width="13.9"/><path d="M761,797 L766,809 L771,821 L777,833 L784,844 L791,855 L800,865" stroke-width="11.0"/><path d="M808,877 L829,901 L851,924 L869,950 L883,978 L894,1008 L906,1037" stroke-width="11.9"/><path d="M359,105 L365,117 L370,130 L375,143 L380,156 L385,169 L390,182" stroke-width="17.1"/><path d="M411,201 L422,213 L433,225 L443,238 L452,252 L459,267 L466,282" stroke-width="16.2"/><path d="M474,306 L493,326 L510,346 L524,369 L536,393 L545,418 L555,444" stroke-width="16.6"/><path d="M581,470 L600,492 L616,515 L629,541 L639,568 L650,595 L663,620" stroke-width="15.4"/><path d="M675,638 L689,661 L707,681 L725,700 L743,721 L758,742 L770,766" stroke-width="10.4"/><path d="M774,786 L779,800 L785,814 L792,827 L800,839 L809,851 L819,862" stroke-width="11.3"/><path d="M841,892 L855,907 L868,922 L880,937 L890,954 L899,972 L906,990" stroke-width="9.2"/><path d="M386,88 L396,111 L404,135 L414,158 L426,180 L441,200 L458,218" stroke-width="11.0"/><path d="M474,255 L489,279 L507,300 L527,321 L545,343 L561,366 L573,392" stroke-width="19.1"/><path d="M589,424 L595,441 L602,457 L610,473 L619,488 L629,502 L641,515" stroke-width="11.9"/><path d="M649,531 L665,548 L681,565 L696,584 L709,603 L719,624 L728,646" stroke-width="12.9"/><path d="M741,683 L752,701 L765,717 L779,732 L794,748 L808,763 L820,780" stroke-width="14.3"/><path d="M820,804 L826,817 L832,829 L839,841 L847,852 L856,863 L866,873" stroke-width="11.4"/><path d="M888,894 L900,909 L911,925 L920,942 L927,960 L934,978 L941,996" stroke-width="7.3"/><path d="M406,76 L419,96 L430,119 L439,143 L448,166 L459,188 L472,209" stroke-width="10.1"/><path d="M482,226 L497,246 L515,265 L532,283 L548,303 L562,325 L572,348" stroke-width="13.1"/><path d="M583,363 L593,389 L603,416 L616,440 L632,463 L650,484 L670,504" stroke-width="10.6"/><path d="M688,526 L698,543 L708,560 L715,578 L722,597 L729,616 L737,634" stroke-width="15.5"/><path d="M758,654 L769,665 L779,676 L788,688 L797,700 L805,713 L811,727" stroke-width="11.9"/><path d="M816,761 L827,775 L839,789 L852,802 L864,815 L876,829 L886,843" stroke-width="9.7"/><path d="M894,884 L906,899 L919,913 L933,927 L945,941 L957,956 L967,972" stroke-width="11.6"/><path d="M414,70 L425,82 L436,94 L447,105 L457,117 L467,130 L475,143" stroke-width="12.0"/><path d="M480,179 L499,202 L520,224 L539,247 L555,272 L568,299 L578,327" stroke-width="18.2"/><path d="M600,343 L614,369 L624,397 L635,425 L649,451 L667,474 L687,496" stroke-width="11.6"/><path d="M707,515 L719,534 L730,554 L738,575 L746,597 L755,618 L766,638" stroke-width="18.1"/><path d="M787,661 L804,679 L820,697 L834,717 L846,738 L855,761 L864,784" stroke-width="12.3"/><path d="M874,805 L881,821 L890,836 L900,851 L911,864 L923,877 L935,890" stroke-width="13.3"/><path d="M955,910 L965,929 L974,949 L981,969 L989,990 L998,1009 L1010,1028" stroke-width="11.8"/><path d="M435,57 L457,80 L477,103 L493,129 L506,157 L516,187 L529,215" stroke-width="14.8"/><path d="M559,242 L570,271 L582,299 L598,325 L617,348 L638,371 L658,394" stroke-width="19.0"/><path d="M660,421 L680,442 L699,463 L716,486 L730,510 L741,537 L751,564" stroke-width="17.9"/><path d="M759,580 L768,598 L778,615 L791,630 L804,645 L818,660 L832,674" stroke-width="16.4"/><path d="M847,707 L852,723 L858,738 L865,753 L873,767 L882,780 L892,792" stroke-width="11.9"/><path d="M910,810 L915,824 L920,837 L926,850 L933,862 L941,874 L949,886" stroke-width="12.0"/><path d="M969,898 L977,907 L985,917 L992,927 L999,938 L1004,949 L1009,960" stroke-width="10.9"/><path d="M465,38 L470,52 L476,65 L482,78 L488,90 L496,102 L505,113" stroke-width="15.5"/><path d="M519,139 L530,154 L541,167 L554,180 L566,193 L578,207 L589,221" stroke-width="15.8"/><path d="M592,249 L610,267 L627,286 L642,306 L654,327 L664,350 L672,374" stroke-width="14.4"/><path d="M692,392 L701,415 L710,438 L720,460 L732,480 L748,499 L764,517" stroke-width="12.4"/><path d="M772,544 L790,565 L810,585 L828,606 L843,628 L855,653 L865,679" stroke-width="10.9"/><path d="M886,696 L893,708 L899,720 L905,733 L910,746 L915,760 L920,773" stroke-width="11.5"/><path d="M939,781 L950,799 L959,817 L967,836 L974,856 L982,875 L991,894" stroke-width="7.3"/><path d="M1005,917 L1012,928 L1020,939 L1028,950 L1037,960 L1046,970 L1056,980" stroke-width="10.7"/><path d="M480,29 L495,45 L509,62 L521,81 L531,100 L539,121 L547,141" stroke-width="19.5"/><path d="M568,157 L579,183 L589,211 L601,238 L617,262 L635,284 L656,305" stroke-width="17.3"/><path d="M680,338 L686,352 L691,367 L697,382 L703,396 L709,411 L717,424" stroke-width="14.9"/><path d="M741,456 L762,478 L782,501 L799,525 L812,552 L823,581 L835,609" stroke-width="17.8"/><path d="M848,623 L857,632 L866,642 L875,652 L883,662 L891,672 L898,683" stroke-width="15.4"/><path d="M909,704 L920,732 L930,760 L944,787 L961,811 L981,833 L1002,855" stroke-width="13.7"/><path d="M1015,872 L1024,892 L1032,912 L1040,933 L1049,953 L1059,972 L1072,989" stroke-width="7.4"/><path d="M506,13 L519,26 L530,41 L540,55 L549,71 L556,88 L563,105" stroke-width="11.8"/><path d="M568,120 L580,148 L596,174 L616,197 L637,220 L657,243 L673,269" stroke-width="19.0"/><path d="M680,302 L700,322 L718,343 L734,365 L746,390 L756,416 L766,442" stroke-width="15.3"/><path d="M775,456 L783,474 L793,490 L804,505 L817,519 L830,533 L844,547" stroke-width="15.6"/><path d="M866,577 L878,603 L888,631 L900,659 L915,684 L933,707 L954,729" stroke-width="17.4"/><path d="M963,743 L969,762 L977,780 L986,798 L996,814 L1008,830 L1022,844" stroke-width="9.4"/><path d="M1039,874 L1049,896 L1060,916 L1073,935 L1089,953 L1105,970 L1121,988" stroke-width="10.8"/><path d="M528,-1 L544,21 L557,44 L567,69 L577,94 L588,119 L601,141" stroke-width="18.2"/><path d="M623,146 L634,168 L643,191 L652,214 L662,237 L674,258 L689,278" stroke-width="15.9"/><path d="M713,309 L720,326 L727,342 L736,358 L747,373 L758,387 L771,400" stroke-width="10.3"/><path d="M772,415 L787,434 L804,452 L821,470 L836,489 L849,509 L860,531" stroke-width="15.1"/><path d="M864,558 L870,571 L877,583 L885,595 L894,607 L903,617 L913,628" stroke-width="15.4"/><path d="M929,642 L933,653 L937,664 L941,676 L946,687 L950,698 L956,708" stroke-width="9.5"/><path d="M969,727 L976,742 L985,755 L994,768 L1005,781 L1016,793 L1027,805" stroke-width="12.2"/><path d="M1037,833 L1054,851 L1071,869 L1086,888 L1099,909 L1109,931 L1118,954" stroke-width="7.5"/><path d="M538,-7 L547,5 L556,17 L565,28 L576,39 L586,50 L596,61" stroke-width="16.4"/><path d="M607,73 L618,99 L627,125 L638,150 L652,174 L669,196 L688,216" stroke-width="12.6"/><path d="M693,241 L708,261 L724,280 L741,298 L758,317 L772,337 L784,359" stroke-width="13.5"/><path d="M797,384 L810,400 L822,417 L832,435 L840,454 L847,474 L855,493" stroke-width="17.3"/><path d="M876,525 L897,547 L917,570 L933,595 L946,622 L956,650 L968,678" stroke-width="14.2"/><path d="M988,684 L994,699 L1000,715 L1006,730 L1012,746 L1019,761 L1027,775" stroke-width="14.3"/><path d="M1042,784 L1058,801 L1073,819 L1085,838 L1095,858 L1103,880 L1111,901" stroke-width="8.0"/><path d="M571,-28 L586,-11 L599,6 L610,25 L619,45 L627,66 L635,87" stroke-width="18.1"/><path d="M658,109 L664,126 L670,143 L678,159 L686,175 L696,190 L707,204" stroke-width="10.5"/><path d="M721,222 L740,242 L758,263 L773,285 L786,310 L796,336 L806,362" stroke-width="10.1"/><path d="M833,383 L843,408 L852,434 L863,458 L878,481 L895,501 L913,521" stroke-width="17.4"/><path d="M919,548 L928,562 L938,575 L949,587 L960,599 L971,611 L982,623" stroke-width="11.6"/><path d="M987,640 L999,654 L1011,668 L1022,683 L1031,699 L1039,716 L1046,733" stroke-width="14.4"/><path d="M1069,758 L1082,780 L1093,804 L1102,829 L1112,853 L1124,876 L1139,897" stroke-width="11.1"/><path d="M586,-37 L601,-20 L617,-4 L632,13 L646,30 L657,49 L667,69" stroke-width="16.4"/><path d="M667,94 L676,107 L687,119 L698,131 L709,143 L720,155 L731,167" stroke-width="10.2"/><path d="M738,206 L748,219 L760,231 L771,243 L783,256 L793,268 L803,282" stroke-width="19.4"/><path d="M809,317 L821,331 L834,344 L846,358 L858,372 L869,387 L878,403" stroke-width="13.3"/><path d="M887,440 L908,463 L928,485 L945,510 L958,537 L969,565 L981,593" stroke-width="16.9"/><path d="M996,619 L1016,643 L1038,667 L1058,691 L1074,718 L1086,747 L1098,777" stroke-width="15.5"/><path d="M1112,799 L1124,825 L1140,849 L1159,872 L1179,893 L1198,915 L1213,939" stroke-width="11.6"/><path d="M603,-47 L612,-34 L623,-22 L634,-10 L645,1 L656,13 L666,26" stroke-width="10.8"/><path d="M682,51 L688,65 L693,78 L699,92 L704,106 L709,120 L716,133" stroke-width="11.1"/><path d="M725,145 L737,159 L751,173 L763,186 L775,201 L786,216 L795,232" stroke-width="10.3"/><path d="M802,249 L818,269 L832,291 L842,314 L851,338 L861,363 L873,385" stroke-width="17.0"/><path d="M894,408 L903,418 L912,427 L921,437 L929,447 L937,458 L944,469" stroke-width="13.6"/><path d="M955,497 L964,523 L976,549 L991,573 L1009,595 L1028,616 L1047,637" stroke-width="10.1"/><path d="M1056,676 L1071,702 L1089,725 L1110,748 L1130,770 L1147,795 L1160,822" stroke-width="8.7"/><path d="M629,-63 L633,-52 L638,-40 L643,-29 L648,-18 L655,-7 L662,3" stroke-width="18.1"/><path d="M690,28 L700,55 L711,81 L725,106 L743,128 L763,149 L782,170" stroke-width="12.9"/><path d="M793,199 L798,212 L803,225 L809,237 L815,249 L822,261 L830,272" stroke-width="12.0"/><path d="M851,299 L866,313 L880,328 L892,344 L903,361 L913,379 L921,398" stroke-width="12.6"/><path d="M932,408 L946,430 L957,453 L967,478 L976,503 L988,526 L1003,548" stroke-width="13.2"/><path d="M1021,564 L1036,580 L1050,597 L1062,615 L1072,634 L1080,655 L1088,676" stroke-width="14.8"/><path d="M1110,705 L1124,720 L1136,735 L1148,752 L1157,769 L1165,788 L1172,807" stroke-width="13.9"/><path d="M653,-79 L669,-62 L684,-45 L697,-27 L708,-8 L717,13 L725,35" stroke-width="18.6"/><path d="M730,55 L746,78 L765,100 L784,120 L803,142 L817,166 L829,192" stroke-width="10.0"/><path d="M829,213 L846,234 L865,254 L883,275 L900,296 L912,320 L923,345" stroke-width="10.0"/><path d="M937,383 L947,402 L959,420 L973,437 L988,453 L1003,469 L1017,485" stroke-width="11.8"/><path d="M1022,523 L1033,538 L1046,552 L1059,566 L1072,579 L1084,594 L1095,609" stroke-width="12.1"/><path d="M1105,645 L1117,658 L1129,670 L1140,684 L1151,698 L1159,713 L1167,729" stroke-width="14.4"/><path d="M1166,752 L1174,764 L1182,775 L1191,785 L1201,796 L1211,806 L1221,816" stroke-width="8.1"/><path d="M683,-97 L695,-73 L705,-47 L715,-21 L728,4 L743,26 L762,47" stroke-width="13.6"/><path d="M776,74 L784,92 L793,109 L804,126 L817,141 L831,155 L844,170" stroke-width="10.9"/><path d="M868,199 L874,209 L880,220 L885,231 L890,243 L894,254 L898,266" stroke-width="12.6"/><path d="M908,283 L924,299 L938,315 L951,332 L962,351 L971,371 L979,392" stroke-width="18.8"/><path d="M996,409 L1009,426 L1021,443 L1030,462 L1037,482 L1045,502 L1053,522" stroke-width="17.5"/><path d="M1079,538 L1093,558 L1104,580 L1113,604 L1122,627 L1132,650 L1145,671" stroke-width="12.2"/><path d="M1159,689 L1179,710 L1199,732 L1216,755 L1229,780 L1239,807 L1250,834" stroke-width="13.6"/><path d="M701,-109 L712,-83 L721,-57 L732,-32 L746,-9 L763,12 L782,33" stroke-width="11.3"/><path d="M796,58 L816,80 L835,103 L849,129 L860,156 L871,184 L884,211" stroke-width="11.9"/><path d="M895,228 L908,250 L923,271 L941,290 L959,309 L975,329 L989,351" stroke-width="11.5"/><path d="M1004,384 L1010,400 L1016,416 L1022,432 L1030,446 L1039,460 L1050,473" stroke-width="15.2"/><path d="M1065,490 L1072,507 L1080,524 L1089,540 L1100,555 L1111,569 L1124,582" stroke-width="19.4"/><path d="M1128,602 L1135,614 L1143,625 L1152,635 L1162,646 L1172,656 L1181,666" stroke-width="9.8"/><path d="M1205,697 L1219,725 L1230,755 L1242,784 L1259,811 L1279,835 L1302,858" stroke-width="13.1"/><path d="M721,-121 L732,-100 L742,-77 L750,-53 L760,-30 L772,-9 L787,10" stroke-width="12.1"/><path d="M808,17 L814,28 L819,39 L824,50 L829,62 L833,74 L838,86" stroke-width="17.9"/><path d="M857,102 L871,119 L883,138 L892,157 L900,178 L908,199 L916,219" stroke-width="14.6"/><path d="M936,242 L945,265 L957,286 L970,305 L986,323 L1003,341 L1019,359" stroke-width="17.4"/><path d="M1020,387 L1032,403 L1045,419 L1059,434 L1074,449 L1087,465 L1098,482" stroke-width="17.5"/><path d="M1100,515 L1109,528 L1119,541 L1130,553 L1141,565 L1153,577 L1164,589" stroke-width="18.2"/><path d="M1181,617 L1196,638 L1207,661 L1217,685 L1226,710 L1237,734 L1251,755" stroke-width="14.2"/><path d="M744,-136 L752,-120 L759,-103 L766,-86 L772,-69 L779,-52 L788,-36" stroke-width="11.0"/><path d="M804,-11 L819,12 L837,33 L856,54 L874,74 L890,97 L902,121" stroke-width="16.3"/><path d="M909,156 L919,173 L931,189 L944,205 L958,220 L972,235 L985,250" stroke-width="16.2"/><path d="M991,277 L1001,301 L1013,323 L1027,344 L1044,363 L1062,381 L1079,401" stroke-width="11.8"/><path d="M1087,440 L1101,464 L1117,486 L1136,506 L1155,526 L1172,548 L1185,572" stroke-width="14.9"/><path d="M1199,591 L1205,602 L1211,613 L1216,625 L1221,637 L1225,649 L1229,660" stroke-width="10.5"/><path d="M1248,682 L1259,711 L1272,739 L1290,764 L1310,787 L1332,809 L1350,834" stroke-width="8.5"/><path d="M753,-141 L767,-119 L784,-99 L802,-80 L820,-60 L835,-39 L848,-16" stroke-width="16.4"/><path d="M851,14 L866,30 L882,47 L897,63 L910,81 L922,100 L931,120" stroke-width="19.5"/><path d="M943,142 L953,166 L962,190 L974,212 L988,233 L1005,252 L1023,271" stroke-width="17.6"/><path d="M1040,289 L1053,318 L1064,348 L1077,377 L1094,403 L1115,427 L1137,450" stroke-width="10.6"/><path d="M1151,469 L1159,487 L1166,506 L1173,525 L1181,543 L1191,560 L1202,576" stroke-width="14.1"/><path d="M1209,589 L1223,610 L1240,630 L1258,649 L1275,668 L1290,689 L1303,711" stroke-width="11.1"/><path d="M1312,733 L1322,758 L1332,783 L1345,806 L1361,827 L1379,847 L1398,867" stroke-width="11.2"/><path d="M778,-157 L787,-139 L797,-123 L810,-108 L823,-93 L837,-79 L850,-64" stroke-width="11.3"/><path d="M856,-44 L875,-24 L892,-1 L905,23 L916,50 L926,76 L938,102" stroke-width="14.7"/><path d="M957,126 L968,138 L979,150 L990,162 L1001,174 L1010,188 L1018,202" stroke-width="13.5"/><path d="M1037,236 L1054,258 L1067,283 L1077,310 L1088,337 L1100,362 L1116,385" stroke-width="14.7"/><path d="M1142,410 L1157,427 L1171,446 L1182,465 L1191,486 L1199,508 L1208,529" stroke-width="18.3"/><path d="M1218,543 L1230,570 L1246,594 L1265,616 L1285,637 L1304,659 L1319,683" stroke-width="12.5"/><path d="M1318,708 L1332,723 L1346,738 L1360,753 L1373,769 L1384,786 L1393,805" stroke-width="7.8"/><path d="M806,-175 L814,-160 L820,-144 L826,-128 L832,-112 L838,-97 L846,-82" stroke-width="14.8"/><path d="M870,-72 L881,-49 L889,-26 L898,-3 L909,19 L923,40 L939,59" stroke-width="13.6"/><path d="M959,82 L979,104 L995,128 L1008,153 L1019,181 L1029,208 L1043,234" stroke-width="18.3"/><path d="M1056,244 L1067,269 L1080,293 L1097,315 L1116,335 L1135,356 L1152,377" stroke-width="18.3"/><path d="M1160,393 L1165,404 L1170,415 L1174,426 L1178,438 L1183,449 L1187,460" stroke-width="19.5"/><path d="M1207,465 L1214,480 L1221,495 L1227,511 L1233,527 L1239,543 L1247,558" stroke-width="11.4"/><path d="M1265,567 L1274,593 L1285,618 L1298,642 L1315,664 L1333,684 L1352,704" stroke-width="10.2"/><path d="M820,-183 L827,-170 L835,-157 L844,-145 L853,-133 L864,-122 L874,-111" stroke-width="16.1"/><path d="M900,-83 L912,-61 L921,-37 L930,-13 L940,10 L952,32 L968,52" stroke-width="17.9"/><path d="M989,82 L1000,94 L1011,105 L1022,117 L1032,129 L1040,142 L1048,156" stroke-width="15.3"/><path d="M1058,188 L1072,203 L1086,218 L1098,235 L1108,253 L1117,271 L1124,291" stroke-width="15.6"/><path d="M1146,321 L1152,337 L1157,352 L1164,367 L1171,382 L1180,396 L1190,409" stroke-width="14.9"/><path d="M1210,417 L1218,437 L1225,457 L1233,477 L1243,496 L1254,514 L1267,530" stroke-width="14.9"/><path d="M1287,539 L1297,559 L1305,581 L1313,602 L1322,623 L1334,642 L1348,660" stroke-width="9.3"/><path d="M1373,687 L1387,703 L1400,719 L1412,737 L1421,756 L1429,776 L1436,796" stroke-width="13.3"/><path d="M843,-197 L850,-178 L858,-160 L868,-142 L880,-126 L893,-111 L907,-96" stroke-width="10.8"/><path d="M934,-67 L946,-46 L956,-23 L965,0 L974,23 L985,45 L999,65" stroke-width="16.1"/><path d="M1006,78 L1023,103 L1044,126 L1065,149 L1084,173 L1098,199 L1110,228" stroke-width="19.8"/><path d="M1115,252 L1128,269 L1142,285 L1157,300 L1172,317 L1184,334 L1195,352" stroke-width="10.3"/><path d="M1214,385 L1228,404 L1240,425 L1250,448 L1259,471 L1268,493 L1279,515" stroke-width="18.6"/><path d="M1292,534 L1302,552 L1315,569 L1329,585 L1344,601 L1358,617 L1372,634" stroke-width="16.6"/><path d="M1377,663 L1392,678 L1406,693 L1418,709 L1430,726 L1439,744 L1447,764" stroke-width="12.8"/><path d="M869,-214 L885,-191 L898,-165 L909,-139 L919,-112 L932,-86 L948,-63" stroke-width="15.0"/><path d="M967,-47 L975,-26 L984,-5 L994,14 L1007,32 L1021,48 L1037,64" stroke-width="16.5"/><path d="M1056,99 L1069,112 L1081,126 L1092,141 L1102,156 L1110,173 L1117,190" stroke-width="13.0"/><path d="M1120,214 L1133,235 L1147,255 L1164,273 L1181,291 L1197,310 L1210,330" stroke-width="10.4"/><path d="M1222,363 L1243,385 L1260,409 L1274,435 L1284,463 L1295,491 L1309,517" stroke-width="10.5"/><path d="M1336,533 L1343,543 L1350,553 L1355,563 L1360,574 L1365,585 L1369,596" stroke-width="18.4"/><path d="M1376,614 L1386,637 L1397,659 L1412,679 L1429,698 L1447,716 L1463,735" stroke-width="16.3"/></g>
<path d="M455.0,325.0 C455.7,313.2 466.8,325.7 480.0,336.0 C493.2,346.3 521.0,367.2 534.0,387.0 C547.0,406.8 553.5,438.8 558.0,455.0 C562.5,471.2 559.3,462.7 561.0,484.0 C562.7,505.3 562.8,550.5 568.0,583.0 C573.2,615.5 582.3,646.8 592.0,679.0 C601.7,711.2 613.8,747.0 626.0,776.0 C638.2,805.0 656.2,828.8 665.0,853.0 C673.8,877.2 681.5,904.5 679.0,921.0 C676.5,937.5 660.5,947.5 650.0,952.0 C639.5,956.5 622.5,961.2 616.0,948.0 C609.5,934.8 613.3,892.0 611.0,873.0 C608.7,854.0 611.7,853.3 602.0,834.0 C592.3,814.7 567.5,781.2 553.0,757.0 C538.5,732.8 523.0,718.0 515.0,689.0 C507.0,660.0 508.3,616.8 505.0,583.0 C501.7,549.2 499.8,515.3 495.0,486.0 C490.2,456.7 482.7,433.8 476.0,407.0 C469.3,380.2 454.3,336.8 455.0,325.0 Z" fill="#b68b6f"/>
<path d="M328,292 C360,314 430,326 472,330" fill="none" stroke="#33221a" stroke-width="22"/>
<path d="M330,288 C362,308 430,320 470,322" fill="none" stroke="#a07a60" stroke-width="5" stroke-dasharray="7 9"/>
<ellipse cx="336" cy="173" rx="11" ry="5" fill="#4a4a50"/><ellipse cx="398" cy="160" rx="11" ry="5" fill="#4a4a50"/>
<path d="M322,158 C332,150 345,150 352,156" fill="none" stroke="#4b3226" stroke-width="4"/><path d="M382,146 C395,138 410,140 418,146" fill="none" stroke="#4b3226" stroke-width="4"/>
<path d="M358,232 C372,226 392,222 408,222 C400,240 372,246 358,232 Z" fill="#a5615e"/>
<path d="M368,175 C366,195 362,205 372,210" fill="none" stroke="#9d7462" stroke-width="4"/>
<circle cx="322" cy="242" r="18" fill="none" stroke="#c9c4c0" stroke-width="3"/>
<path d="M459,188 L459,226" stroke="#d0ccc8" stroke-width="4"/>
<path d="M310,170 C304,130 330,95 372,80 C345,105 322,140 316,200 C315,230 316,250 320,272 C300,250 303,200 310,170 Z" fill="#33241c"/><path d="M400,80 C440,90 470,130 468,190 C468,230 462,270 470,300 C450,270 455,230 455,190 C452,140 430,105 400,80 Z" fill="#33241c"/>
</g></svg>
</div>
<!-- product card 2 -->
<div class="abs" style="left:463px;top:379px;width:346px;height:550px;background:#afafaf;box-shadow:0 2px 3px rgba(0,0,0,.22),0 1px 5px rgba(0,0,0,.12)">
<svg class="abs" style="left:0;top:0" width="346" height="415" viewBox="22 20 775 930" preserveAspectRatio="none">
<defs><linearGradient id="bg2" x1="0" x2="1" y1="0" y2="0"><stop offset="0" stop-color="#9d9c9c"/><stop offset="1" stop-color="#a2a1a1"/></linearGradient>
<linearGradient id="sk2" x1="0" x2="1" y1="0" y2="0"><stop offset="0" stop-color="#3e241a"/><stop offset=".45" stop-color="#5f3a29"/><stop offset="1" stop-color="#744935"/></linearGradient>
<radialGradient id="nk2" cx=".55" cy=".55" r=".6"><stop offset="0" stop-color="#653a28"/><stop offset="1" stop-color="#3a2018"/></radialGradient>
<filter id="soft2" filterUnits="userSpaceOnUse" x="0" y="0" width="830" height="990"><feGaussianBlur stdDeviation="1.6"/></filter><filter id="bl2" filterUnits="userSpaceOnUse" x="0" y="0" width="830" height="990"><feGaussianBlur stdDeviation="14"/></filter><clipPath id="fc2"><path d="M293.0,262.0 C297.2,240.3 301.5,247.5 308.0,233.0 C314.5,218.5 321.7,194.3 332.0,175.0 C342.3,155.7 353.2,132.3 370.0,117.0 C386.8,101.7 410.3,87.0 433.0,83.0 C455.7,79.0 486.7,85.7 506.0,93.0 C525.3,100.3 541.0,119.0 549.0,127.0 C557.0,135.0 549.2,132.2 554.0,141.0 C558.8,149.8 574.8,166.3 578.0,180.0 C581.2,193.7 572.2,207.8 573.0,223.0 C573.8,238.2 581.0,253.3 583.0,271.0 C585.0,288.7 587.5,316.0 585.0,329.0 C582.5,342.0 572.3,339.3 568.0,349.0 C563.7,358.7 561.3,372.5 559.0,387.0 C556.7,401.5 562.8,421.5 554.0,436.0 C545.2,450.5 522.2,466.0 506.0,474.0 C489.8,482.0 474.7,482.0 457.0,484.0 C439.3,486.0 416.2,488.3 400.0,486.0 C383.8,483.7 374.7,480.8 360.0,470.0 C345.3,459.2 324.8,438.8 312.0,421.0 C299.2,403.2 286.2,389.5 283.0,363.0 C279.8,336.5 288.8,283.7 293.0,262.0 Z"/></clipPath></defs>
<rect x="22" y="20" width="775" height="930" fill="url(#bg2)"/><g filter="url(#soft2)">
<path d="M283,340 L283,563 C300,600 380,640 457,672 C480,640 540,580 563,534 L556,420 Z" fill="url(#nk2)"/>
<path d="M418,641 L440,636 L500,610 L457,672 Z" fill="#c6c6c6"/>
<path d="M182.0,500.0 C191.7,485.3 213.2,475.0 230.0,470.0 C246.8,465.0 274.2,454.5 283.0,470.0 C291.8,485.5 275.0,539.3 283.0,563.0 C291.0,586.7 308.5,599.0 331.0,612.0 C353.5,625.0 397.0,631.0 418.0,641.0 C439.0,651.0 442.5,678.5 457.0,672.0 C471.5,665.5 487.3,625.0 505.0,602.0 C522.7,579.0 554.5,556.0 563.0,534.0 C571.5,512.0 549.8,487.0 556.0,470.0 C562.2,453.0 585.2,437.7 600.0,432.0 C614.8,426.3 633.3,427.0 645.0,436.0 C656.7,445.0 663.5,467.2 670.0,486.0 C676.5,504.8 672.3,535.0 684.0,549.0 C695.7,563.0 720.7,563.2 740.0,570.0 C759.3,576.8 773.3,581.7 800.0,590.0 C826.7,598.3 883.3,551.7 900.0,620.0 C916.7,688.3 1063.3,936.7 900.0,1000.0 C736.7,1063.3 83.3,1023.3 -80.0,1000.0 C-243.3,976.7 -97.0,895.7 -80.0,860.0 C-63.0,824.3 -7.2,809.7 22.0,786.0 C51.2,762.3 74.0,737.3 95.0,718.0 C116.0,698.7 136.7,684.5 148.0,670.0 C159.3,655.5 159.0,649.7 163.0,631.0 C167.0,612.3 168.8,579.8 172.0,558.0 C175.2,536.2 172.3,514.7 182.0,500.0 Z" fill="#808080"/>
<path d="M182,500 C230,470 283,470 283,470 L283,563 C262,540 232,530 212,562 C195,540 186,520 182,500 Z" fill="#8b8b8b"/>
<path d="M556,470 C580,440 620,430 645,436 C640,480 610,520 563,540 Z" fill="#8a8a8a"/>
<path d="M148,670 C250,690 360,700 457,690 C540,670 640,620 684,549" fill="none" stroke="#727272" stroke-width="5"/>
<path d="M283,563 C300,600 380,640 457,672 C480,640 540,580 563,534" fill="none" stroke="#8c8c8c" stroke-width="10"/>
<path d="M293.0,262.0 C297.2,240.3 301.5,247.5 308.0,233.0 C314.5,218.5 321.7,194.3 332.0,175.0 C342.3,155.7 353.2,132.3 370.0,117.0 C386.8,101.7 410.3,87.0 433.0,83.0 C455.7,79.0 486.7,85.7 506.0,93.0 C525.3,100.3 541.0,119.0 549.0,127.0 C557.0,135.0 549.2,132.2 554.0,141.0 C558.8,149.8 574.8,166.3 578.0,180.0 C581.2,193.7 572.2,207.8 573.0,223.0 C573.8,238.2 581.0,253.3 583.0,271.0 C585.0,288.7 587.5,316.0 585.0,329.0 C582.5,342.0 572.3,339.3 568.0,349.0 C563.7,358.7 561.3,372.5 559.0,387.0 C556.7,401.5 562.8,421.5 554.0,436.0 C545.2,450.5 522.2,466.0 506.0,474.0 C489.8,482.0 474.7,482.0 457.0,484.0 C439.3,486.0 416.2,488.3 400.0,486.0 C383.8,483.7 374.7,480.8 360.0,470.0 C345.3,459.2 324.8,438.8 312.0,421.0 C299.2,403.2 286.2,389.5 283.0,363.0 C279.8,336.5 288.8,283.7 293.0,262.0 Z" fill="url(#sk2)"/>
<g clip-path="url(#fc2)"><g filter="url(#bl2)">
<ellipse cx="455" cy="140" rx="95" ry="45" fill="#85583f" opacity=".8"/>
<ellipse cx="440" cy="300" rx="75" ry="70" fill="#7d503a" opacity=".75"/>
<ellipse cx="520" cy="280" rx="40" ry="40" fill="#86573f" opacity=".8"/>
<ellipse cx="330" cy="400" rx="70" ry="110" fill="#3c2119" opacity=".6"/>
<ellipse cx="480" cy="470" rx="120" ry="40" fill="#4a2a1e" opacity=".7"/>
</g></g>
<ellipse cx="245" cy="312" rx="46" ry="57" fill="#482a1e"/>
<ellipse cx="252" cy="316" rx="24" ry="36" fill="#3a211a"/>
<path d="M199.0,189.0 C197.2,169.5 200.7,153.7 205.0,140.0 C209.3,126.3 215.2,119.7 225.0,107.0 C234.8,94.3 249.5,76.0 264.0,64.0 C278.5,52.0 291.0,42.7 312.0,35.0 C333.0,27.3 365.8,18.0 390.0,18.0 C414.2,18.0 437.7,27.3 457.0,35.0 C476.3,42.7 493.0,52.8 506.0,64.0 C519.0,75.2 527.8,91.5 535.0,102.0 C542.2,112.5 553.8,128.5 549.0,127.0 C544.2,125.5 525.3,100.3 506.0,93.0 C486.7,85.7 455.7,79.0 433.0,83.0 C410.3,87.0 386.8,101.7 370.0,117.0 C353.2,132.3 342.3,155.7 332.0,175.0 C321.7,194.3 314.5,218.5 308.0,233.0 C301.5,247.5 299.3,257.2 293.0,262.0 C286.7,266.8 278.8,264.0 270.0,262.0 C261.2,260.0 249.0,250.8 240.0,250.0 C231.0,249.2 222.8,267.2 216.0,257.0 C209.2,246.8 200.8,208.5 199.0,189.0 Z" fill="#1b1614"/>
<path d="M380,186 C410,168 450,163 486,180" fill="none" stroke="#21140f" stroke-width="10"/>
<path d="M525,180 C545,170 565,172 575,178" fill="none" stroke="#21140f" stroke-width="9"/>
<ellipse cx="433" cy="222" rx="30" ry="9" fill="#1c110d"/><ellipse cx="549" cy="227" rx="20" ry="8" fill="#1c110d"/>
<ellipse cx="420" cy="222" rx="9" ry="5" fill="#9a958f"/><ellipse cx="541" cy="227" rx="6" ry="4" fill="#9a958f"/>
<ellipse cx="505" cy="302" rx="14" ry="7" fill="#2e1a14"/>
<path d="M457,366 C490,338 540,330 570,342 C570,378 548,400 516,400 C490,394 470,384 457,366 Z" fill="#96625d"/>
<path d="M457,366 C490,336 545,330 570,342 C560,352 530,352 500,360 Z" fill="#4a2c26"/>
<rect x="488" y="354" width="46" height="10" rx="3" fill="#bdb8b2"/>
<path d="M387,650 C400,700 430,830 452,950" fill="none" stroke="#757575" stroke-width="11"/>
<path d="M529,613 C533,700 550,840 566,950" fill="none" stroke="#757575" stroke-width="11"/>
<circle cx="387" cy="650" r="10" fill="none" stroke="#c2c2be" stroke-width="6"/><circle cx="529" cy="613" r="10" fill="none" stroke="#c2c2be" stroke-width="6"/>
<path d="M22,786 C66,824 104,911 119,950" fill="none" stroke="#717171" stroke-width="5"/>
<path d="M684,549 C700,600 705,640 700,690" fill="none" stroke="#767676" stroke-width="4"/>
</g></svg>
</div>
<!-- product card 3 -->
<div class="abs" style="left:839px;top:379px;width:346px;height:550px;background:#afafaf;box-shadow:0 2px 3px rgba(0,0,0,.22),0 1px 5px rgba(0,0,0,.12)">
<div class="abs" style="left:0;top:0;width:346px;height:415px;background:#a09f9f"></div>
</div>

<div class="t" style="left:83.80px;top:40px;font-size:25px;letter-spacing:0.000px;color:#121212;">/</div>
<div class="t" style="left:106.80px;top:172px;font-size:29.5px;letter-spacing:0.958px;color:#121212;-webkit-text-stroke:1.0px #121212;">Primary list</div>
<div class="t" style="left:288.30px;top:177px;font-size:20.5px;letter-spacing:0.709px;color:#121212;-webkit-text-stroke:0.5px #121212;">27566 products</div>
<div class="t" style="left:624.40px;top:296px;font-size:21.5px;letter-spacing:0.212px;color:#121212;">This page is going to inherit its</div>
<div class="t" style="left:157.30px;top:807px;font-size:21px;letter-spacing:-0.101px;color:#121212;-webkit-text-stroke:0.6px #121212;">AD_0751_P_906_003</div>
<div class="t" style="left:140.40px;top:840px;font-size:21.5px;letter-spacing:0.043px;color:#121212;">Long Dress with Flounce</div>
<div class="t" style="left:185.40px;top:895px;font-size:21.5px;letter-spacing:-0.599px;color:#121212;">Price (€): 110.19</div>
<div class="t" style="left:533.60px;top:807px;font-size:21px;letter-spacing:-0.101px;color:#121212;-webkit-text-stroke:0.6px #121212;">AD_0702_P_720_001</div>
<div class="t" style="left:504.30px;top:840px;font-size:21.5px;letter-spacing:0.448px;color:#121212;">Cotton Hooded Sweatshirt</div>
<div class="t" style="left:564.00px;top:895px;font-size:21.5px;letter-spacing:-0.268px;color:#121212;">Price (€): 69.99</div>
<div class="t" style="left:907.50px;top:807px;font-size:21px;letter-spacing:0.000px;color:#121212;-webkit-text-stroke:0.6px #121212;">A</div>
  <!-- right drawer -->
  <div class="abs" id="drawer" style="left:909px;top:0;width:1146px;height:960px;background:#fff">
    <div class="abs" style="left:0;top:102px;width:1146px;height:1px;background:#e0e0e0"></div>
    <!-- save button -->
<div class="abs" style="left:1014px;top:24px;width:96px;height:54px;border-radius:6px;background:#2e6b6b"></div>
<!-- apply to subpages card -->
<div class="abs" style="left:24px;top:127px;width:1096px;height:90px;border:1px solid #e0e0e0;border-radius:6px"></div>
<div class="abs" style="left:1043px;top:164.5px;width:51px;height:21px;border-radius:11px;background:#629c9a"></div>
<div class="abs" style="left:1067px;top:159.7px;width:30px;height:30px;border-radius:50%;background:#2e6b6b;box-shadow:0 3px 2px -1px rgba(0,0,0,.2),0 2px 2px rgba(0,0,0,.14),0 1px 4px rgba(0,0,0,.12)"></div>
<!-- radio card -->
<div class="abs" style="left:24px;top:255px;width:1096px;height:84px;border:1px solid #e0e0e0;border-radius:6px"></div>
<div class="abs" style="left:572px;top:255px;width:1px;height:85px;background:#e0e0e0"></div>
<svg class="abs" style="left:49px;top:280px" width="36" height="36" viewBox="0 0 36 36"><circle cx="18" cy="18" r="13.5" fill="none" stroke="#2e6b6b" stroke-width="3"/><circle cx="18" cy="18" r="7.5" fill="#2e6b6b"/></svg>
<svg class="abs" style="left:511.7px;top:280px" width="36" height="36" viewBox="0 0 36 36"><circle cx="18" cy="18" r="13.5" fill="none" stroke="#111" stroke-width="3"/><rect x="16.5" y="10.5" width="3" height="3" fill="#111"/><rect x="16.5" y="16.5" width="3" height="9" fill="#111"/></svg>
<svg class="abs" style="left:596.8px;top:280px" width="36" height="36" viewBox="0 0 36 36"><circle cx="18" cy="18" r="13.5" fill="none" stroke="#6e6e6e" stroke-width="3"/></svg>
<svg class="abs" style="left:1060.5px;top:280px" width="36" height="36" viewBox="0 0 36 36"><circle cx="18" cy="18" r="13.5" fill="none" stroke="#111" stroke-width="3"/><rect x="16.5" y="10.5" width="3" height="3" fill="#111"/><rect x="16.5" y="16.5" width="3" height="9" fill="#111"/></svg>
<!-- search field -->
<div class="abs" style="left:24px;top:377px;width:849px;height:58px;border:1px solid #8a8a8a;border-radius:6px"></div>
<svg class="abs" style="left:41.6px;top:393.1px" width="30" height="30" viewBox="0 0 24 24"><path fill="#1c1c1c" d="M15.5 14h-.79l-.28-.27C15.41 12.59 16 11.11 16 9.5 16 5.91 13.09 3 9.5 3S3 5.91 3 9.5 5.91 16 9.5 16c1.61 0 3.09-.59 4.23-1.57l.27.28v.79l5 4.99L20.49 19l-4.99-5zm-6 0C7.01 14 5 11.99 5 9.5S7.01 5 9.5 5 14 7.01 14 9.5 11.99 14 9.5 14z"/></svg>
<!-- toggle group -->
<div class="abs" style="left:899px;top:378px;width:221px;height:56px;border:1px solid #e0e0e0;border-radius:6px;overflow:hidden"><div class="abs" style="left:0;top:0;width:103px;height:56px;background:#e6e6e6;border-right:1px solid #dcdcdc"></div></div>
<!-- table card -->
<div class="abs" style="left:24px;top:461px;width:1096px;height:520px;border:1px solid #e0e0e0;border-radius:6px"></div>
<div class="abs" style="left:25px;top:545px;width:1096px;height:1px;background:#e0e0e0"></div>
<div class="abs" style="left:25px;top:623px;width:1096px;height:1px;background:#e0e0e0"></div>
<div class="abs" style="left:25px;top:701px;width:1096px;height:1px;background:#e0e0e0"></div>
<div class="abs" style="left:25px;top:779px;width:1096px;height:1px;background:#e0e0e0"></div>
<!-- checkboxes -->
<div class="abs" style="left:53.1px;top:570.9px;width:21px;height:21px;border:3px solid #6b6b6b;border-radius:3px"></div>
<div class="abs" style="left:53.1px;top:648.9px;width:21px;height:21px;border:3px solid #6b6b6b;border-radius:3px"></div>
<div class="abs" style="left:53.1px;top:726.9px;width:21px;height:21px;border:3px solid #6b6b6b;border-radius:3px"></div>
<!-- kebab -->
<div class="abs" style="left:1036.7px;top:548.8px;width:72px;height:72px;border-radius:50%;background:#e6eeee"></div>
<svg class="abs" style="left:1054.7px;top:566.8px" width="36" height="36" viewBox="0 0 36 36"><circle cx="18" cy="9" r="3" fill="#2e6b6b"/><circle cx="18" cy="18" r="3" fill="#2e6b6b"/><circle cx="18" cy="27" r="3" fill="#2e6b6b"/></svg>

  </div>
</div>
<div class="abs" id="menu" style="left:1969px;top:641px;width:291px;height:168px;background:#fff;border-radius:6px;box-shadow:0 8px 8px -5px rgba(0,0,0,.2),0 12px 15px 2px rgba(0,0,0,.14),0 5px 21px 3px rgba(0,0,0,.12)"></div>
<svg class="abs" style="left:1990px;top:671px" width="44" height="36" viewBox="1990 671 44 36"><rect x="1997.5" y="681.6" width="14.7" height="14.8" rx="1.5" fill="none" stroke="#2e6b6b" stroke-width="3"/><g fill="#2e6b6b"><circle cx="2018.5" cy="681.7" r="1.5"/><circle cx="2024.4" cy="681.7" r="1.5"/><circle cx="2024.4" cy="689" r="1.5"/><circle cx="2018.5" cy="696.3" r="1.5"/><circle cx="2024.4" cy="696.3" r="1.5"/></g></svg>
<svg class="abs" style="left:1990px;top:740px" width="44" height="42" viewBox="1990 740 44 42"><path d="M1998.95 769.02L2019.2 748.77L2023.33 752.9L2002.88 773.35L1998.95 773.35Z" fill="#2e6b6b" stroke="#2e6b6b" stroke-width="3" stroke-linejoin="round"/><path d="M2019.5 750.3L2021.8 752.6L2019.5 754.9L2017.2 752.6Z" fill="#fff"/></svg>

<div class="t" style="left:967.00px;top:56px;font-size:29.5px;letter-spacing:-0.068px;color:#1c1c1c;-webkit-text-stroke:0.9px #1c1c1c;">Slices</div>
<div class="t" style="left:1839.50px;top:61px;font-size:21.5px;letter-spacing:0.090px;color:#2e6b6b;-webkit-text-stroke:0.5px #2e6b6b;">Cancel</div>
<div class="t" style="left:1969.85px;top:61px;font-size:21.5px;letter-spacing:-0.366px;color:#fff;-webkit-text-stroke:0.9px #fff;">Save</div>
<div class="t" style="left:980.90px;top:183px;font-size:22.5px;letter-spacing:1.176px;color:#1c1c1c;-webkit-text-stroke:0.3px #1c1c1c;">Apply to subpages</div>
<div class="t" style="left:1034.80px;top:308px;font-size:21.5px;letter-spacing:-0.037px;color:#1c1c1c;-webkit-text-stroke:0.2px #1c1c1c;">Sequential slices</div>
<div class="t" style="left:1582.40px;top:308px;font-size:21.5px;letter-spacing:-0.018px;color:#1c1c1c;-webkit-text-stroke:0.2px #1c1c1c;">Positioned slices</div>
<div class="t" style="left:1026.70px;top:416px;font-size:23px;letter-spacing:1.011px;color:#757575;">Search all sets</div>
<div class="t" style="left:1850.90px;top:418px;font-size:21.5px;letter-spacing:-0.607px;color:#1c1c1c;-webkit-text-stroke:0.2px #1c1c1c;">All sets</div>
<div class="t" style="left:1953.00px;top:418px;font-size:21.5px;letter-spacing:-0.330px;color:#1c1c1c;-webkit-text-stroke:0.2px #1c1c1c;">Selected</div>
<div class="t" style="left:1130.20px;top:513px;font-size:21px;letter-spacing:0.141px;color:#1c1c1c;-webkit-text-stroke:0.6px #1c1c1c;">Product set</div>
<div class="t" style="left:1530.50px;top:513px;font-size:21px;letter-spacing:-0.391px;color:#1c1c1c;-webkit-text-stroke:0.6px #1c1c1c;">Slice size</div>
<div class="t" style="left:1664.80px;top:513px;font-size:21px;letter-spacing:0.891px;color:#1c1c1c;-webkit-text-stroke:0.6px #1c1c1c;">Created/modified</div>
<div class="t" style="left:1890.00px;top:513px;font-size:21px;letter-spacing:-0.607px;color:#1c1c1c;-webkit-text-stroke:0.6px #1c1c1c;">By</div>
<div class="t" style="left:1130.80px;top:595px;font-size:21.5px;letter-spacing:0.130px;color:#1c1c1c;-webkit-text-stroke:0.2px #1c1c1c;">Kids Spring Collection</div>
<div class="t" style="left:1634.00px;top:595px;font-size:21.5px;letter-spacing:0.000px;color:#1c1c1c;-webkit-text-stroke:0.2px #1c1c1c;">-</div>
<div class="t" style="left:1664.80px;top:595px;font-size:21.5px;letter-spacing:-0.533px;color:#1c1c1c;-webkit-text-stroke:0.2px #1c1c1c;">2025-11-14 15:04</div>
<div class="t" style="left:1890.00px;top:595px;font-size:21.5px;letter-spacing:-0.840px;color:#1c1c1c;-webkit-text-stroke:0.2px #1c1c1c;">BH</div>
<div class="t" style="left:1131.20px;top:673px;font-size:21.5px;letter-spacing:-0.113px;color:#1c1c1c;-webkit-text-stroke:0.2px #1c1c1c;">Sports set</div>
<div class="t" style="left:1634.00px;top:673px;font-size:21.5px;letter-spacing:0.000px;color:#1c1c1c;-webkit-text-stroke:0.2px #1c1c1c;">-</div>
<div class="t" style="left:1664.80px;top:673px;font-size:21.5px;letter-spacing:-0.440px;color:#1c1c1c;-webkit-text-stroke:0.2px #1c1c1c;">2024-10-31 12:20</div>
<div class="t" style="left:1130.20px;top:751px;font-size:21.5px;letter-spacing:-0.106px;color:#1c1c1c;-webkit-text-stroke:0.2px #1c1c1c;">Golden Bloom Dresses</div>
<div class="t" style="left:1634.00px;top:751px;font-size:21.5px;letter-spacing:0.000px;color:#1c1c1c;-webkit-text-stroke:0.2px #1c1c1c;">-</div>
<div class="t" style="left:1664.80px;top:751px;font-size:21.5px;letter-spacing:-0.600px;color:#1c1c1c;-webkit-text-stroke:0.2px #1c1c1c;">2025-11-14 15:07</div>
<div class="t" style="left:1890.00px;top:751px;font-size:21.5px;letter-spacing:-0.840px;color:#1c1c1c;-webkit-text-stroke:0.2px #1c1c1c;">BH</div>
<div class="t" style="left:2053.20px;top:679px;font-size:22px;letter-spacing:1.248px;color:#1c1c1c;-webkit-text-stroke:0.2px #1c1c1c;">Edit slice size</div>
<div class="t" style="left:2053.20px;top:751px;font-size:22px;letter-spacing:1.910px;color:#1c1c1c;-webkit-text-stroke:0.2px #1c1c1c;">Edit product set</div>
</body>
</html>
